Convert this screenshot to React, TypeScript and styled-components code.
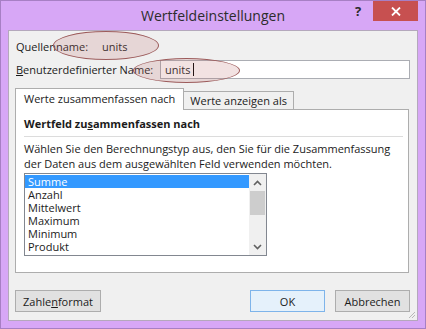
import React from "react";
import styled, { createGlobalStyle } from "styled-components";

const GlobalStyle = createGlobalStyle`
  body {
    margin: 0;
    background: #ffffff;
    font-family: "Open Sans", "Noto Sans", sans-serif;
  }
`;

const Window = styled.div`
  position: relative;
  width: 426px;
  height: 329px;
  box-sizing: border-box;
  background: #d7a7f6;
  border: 1px solid #a77fc4;
  display: flex;
  flex-direction: column;
  font-size: 11px;
  color: #1b1b1b;
`;

const TitleBar = styled.div`
  height: 29px;
  display: grid;
  grid-template-columns: 1fr auto 1fr;
  align-items: start;
`;

const Title = styled.div`
  grid-column: 2;
  font-size: 14px;
  color: #2c2c2c;
  line-height: 29px;
`;

const Controls = styled.div`
  grid-column: 3;
  justify-self: end;
  display: flex;
  margin-right: 7px;
`;

const HelpButton = styled.div`
  width: 30px;
  height: 20px;
  display: flex;
  align-items: center;
  justify-content: center;
  font-weight: bold;
  font-size: 13px;
  color: #2a2a2a;
`;

const CloseButton = styled.div`
  width: 45px;
  height: 20px;
  background: #c75050;
  display: flex;
  align-items: center;
  justify-content: center;
`;

const Client = styled.div`
  position: relative;
  flex: 1;
  margin: 0 7px 8px 7px;
  background: #f0f0f0;
  border: 1px solid #b4a8bc;
  padding: 6px 7px 8px 6px;
  display: flex;
  flex-direction: column;
`;

const Row = styled.div<{ $h: number; $mt?: number }>`
  display: flex;
  align-items: center;
  height: ${(p) => p.$h}px;
  margin-top: ${(p) => p.$mt ?? 0}px;
`;

const Label = styled.span<{ $w?: number }>`
  width: ${(p) => (p.$w ? `${p.$w}px` : "auto")};
  flex-shrink: 0;
  padding-left: 1px;
`;

const Value = styled.span`
  margin-left: 14px;
`;

const TextInput = styled.div`
  flex: 1;
  height: 19px;
  box-sizing: border-box;
  background: #ffffff;
  border: 1px solid #abadb3;
  display: flex;
  align-items: center;
  padding-left: 4px;
`;

const Caret = styled.span`
  display: inline-block;
  width: 1px;
  height: 13px;
  background: #000;
  margin-left: 3px;
`;

const TabStrip = styled.div`
  display: flex;
  align-items: flex-end;
  margin-top: 9px;
  margin-bottom: -1px;
  position: relative;
  z-index: 1;
`;

const Tab = styled.div<{ $active?: boolean }>`
  box-sizing: border-box;
  height: ${(p) => (p.$active ? 22 : 19)}px;
  padding: 0 ${(p) => (p.$active ? 8 : 6)}px;
  border: 1px solid #adadad;
  border-bottom: ${(p) => (p.$active ? "none" : "1px solid #adadad")};
  border-left: ${(p) => (p.$active ? "1px solid #adadad" : "none")};
  background: ${(p) => (p.$active ? "#ffffff" : "#f0f0f0")};
  display: flex;
  align-items: center;
  padding-bottom: ${(p) => (p.$active ? 3 : 0)}px;
  white-space: nowrap;
`;

const Panel = styled.div`
  width: 394px;
  height: 164px;
  box-sizing: border-box;
  background: #ffffff;
  border: 1px solid #adadad;
  padding: 0 5px 0 8px;
  display: flex;
  flex-direction: column;
`;

const Heading = styled.div`
  font-weight: bold;
  height: 25px;
  display: flex;
  align-items: center;
  padding-top: 1px;
  border-bottom: 1px solid #dcdcdc;
`;

const Description = styled.div`
  margin-top: 4px;
  line-height: 15px;
  white-space: nowrap;
`;

const ListBox = styled.div`
  margin-top: 2px;
  width: 243px;
  height: 83px;
  box-sizing: border-box;
  border: 1px solid #828790;
  display: flex;
`;

const Items = styled.div`
  flex: 1;
  padding-top: 1px;
`;

const Item = styled.div<{ $selected?: boolean }>`
  height: 13px;
  line-height: 13px;
  padding-left: 3px;
  background: ${(p) => (p.$selected ? "#3399ff" : "transparent")};
  color: ${(p) => (p.$selected ? "#ffffff" : "#1b1b1b")};
`;

const ScrollBar = styled.div`
  width: 17px;
  background: #f0f0f0;
  display: flex;
  flex-direction: column;
  align-items: center;
`;

const Arrow = styled.div`
  height: 17px;
  width: 17px;
  display: flex;
  align-items: center;
  justify-content: center;
`;

const Thumb = styled.div`
  width: 15px;
  height: 24px;
  background: #cdcdcd;
`;

const Track = styled.div`
  flex: 1;
`;

const ButtonRow = styled.div`
  margin-top: 17px;
  display: flex;
  gap: 10px;
`;

const Button = styled.div<{ $w: number; $default?: boolean }>`
  width: ${(p) => p.$w}px;
  height: 22px;
  box-sizing: border-box;
  border: 1px solid ${(p) => (p.$default ? "#7eb4ea" : "#adadad")};
  background: ${(p) => (p.$default ? "#e5f1fb" : "#e1e1e1")};
  display: flex;
  align-items: center;
  justify-content: center;
`;

const Spacer = styled.div`
  flex: 1;
`;

const Grip = styled.svg`
  position: absolute;
  right: 1px;
  bottom: 1px;
`;

const Ellipse = styled.div<{ $x: number; $y: number; $w: number; $h: number }>`
  position: absolute;
  left: ${(p) => p.$x}px;
  top: ${(p) => p.$y}px;
  width: ${(p) => p.$w}px;
  height: ${(p) => p.$h}px;
  box-sizing: border-box;
  border-radius: 50%;
  border: 1px solid #9c5b5b;
  background: rgba(190, 110, 110, 0.2);
  pointer-events: none;
`;

const U = styled.span`
  text-decoration: underline;
`;

const Chevron = ({ up }: { up?: boolean }) => (
  <svg width="9" height="6" viewBox="0 0 9 6">
    <path
      d={up ? "M1 5 L4.5 1.5 L8 5" : "M1 1 L4.5 4.5 L8 1"}
      fill="none"
      stroke="#606060"
      strokeWidth="1.6"
    />
  </svg>
);

const items = ["Summe", "Anzahl", "Mittelwert", "Maximum", "Minimum", "Produkt"];

export default function App() {
  return (
    <>
      <GlobalStyle />
      <Window>
        <TitleBar>
          <Title>Wertfeldeinstellungen</Title>
          <Controls>
            <HelpButton>?</HelpButton>
            <CloseButton>
              <svg width="10" height="9" viewBox="0 0 10 9">
                <path d="M1 0.5 L9 8.5 M9 0.5 L1 8.5" stroke="#fff" strokeWidth="1.8" />
              </svg>
            </CloseButton>
          </Controls>
        </TitleBar>
        <Client>
          <Row $h={18}>
            <Label>Quellenname:</Label>
            <Value>units</Value>
          </Row>
          <Row $h={19} $mt={5}>
            <Label $w={144}>
              <U>B</U>enutzerdefinierter Name:
            </Label>
            <TextInput>
              units
              <Caret />
            </TextInput>
          </Row>
          <TabStrip>
            <Tab $active>Werte zusammenfassen nach</Tab>
            <Tab>Werte anzeigen als</Tab>
          </TabStrip>
          <Panel>
            <Heading>
              <span>
                Wertfeld zu<U>s</U>ammenfassen nach
              </span>
            </Heading>
            <Description>
              Wählen Sie den Berechnungstyp aus, den Sie für die Zusammenfassung
              <br />
              der Daten aus dem ausgewählten Feld verwenden möchten.
            </Description>
            <ListBox>
              <Items>
                {items.map((it, i) => (
                  <Item key={it} $selected={i === 0}>
                    {it}
                  </Item>
                ))}
              </Items>
              <ScrollBar>
                <Arrow>
                  <Chevron up />
                </Arrow>
                <Thumb />
                <Track />
                <Arrow>
                  <Chevron />
                </Arrow>
              </ScrollBar>
            </ListBox>
          </Panel>
          <ButtonRow>
            <Button $w={86}>
              <span>
                Zahle<U>n</U>format
              </span>
            </Button>
            <Spacer />
            <Button $w={75} $default>
              OK
            </Button>
            <Button $w={75}>Abbrechen</Button>
          </ButtonRow>
          <Grip width="9" height="9" viewBox="0 0 9 9">
            <path d="M8 2 L2 8 M8 5 L5 8" stroke="#b8b8b8" strokeWidth="1" />
          </Grip>
        </Client>
        <Ellipse $x={52} $y={30} $w={106} $h={29} />
        <Ellipse $x={132} $y={57} $w={107} $h={25} />
      </Window>
    </>
  );
}
